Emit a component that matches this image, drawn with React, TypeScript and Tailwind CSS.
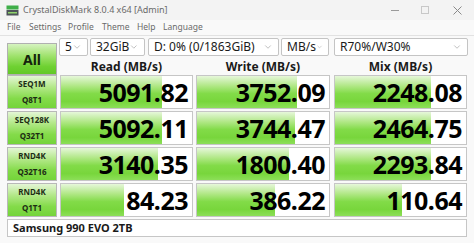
import React from 'react';
import { ChevronDown } from 'lucide-react';

interface Row {
  l1: string;
  l2: string;
  vals: { text: string; fill: number }[];
}

const rows: Row[] = [
  { l1: 'SEQ1M', l2: 'Q8T1', vals: [{ text: '5091.82', fill: 0.774 }, { text: '3752.09', fill: 0.754 }, { text: '2248.08', fill: 0.73 }] },
  { l1: 'SEQ128K', l2: 'Q32T1', vals: [{ text: '5092.11', fill: 0.774 }, { text: '3744.47', fill: 0.746 }, { text: '2464.75', fill: 0.73 }] },
  { l1: 'RND4K', l2: 'Q32T16', vals: [{ text: '3140.35', fill: 0.744 }, { text: '1800.40', fill: 0.7 }, { text: '2293.84', fill: 0.73 }] },
  { l1: 'RND4K', l2: 'Q1T1', vals: [{ text: '84.23', fill: 0.48 }, { text: '386.22', fill: 0.59 }, { text: '110.64', fill: 0.51 }] },
];

const colWidths = ['w-[133px]', 'w-[134px]', 'w-[133px]'];

const Select = ({ text, width }: { text: string; width: string }) => (
  <div className={`${width} h-[18px] flex items-center justify-between bg-white border border-[#c4c4c4] rounded-[2px] pl-[5px] pr-[5px]`}>
    <span className="text-[12px] leading-none text-[#1a1a1a]">{text}</span>
    <ChevronDown size={10} strokeWidth={1.5} className="text-[#9a9a9a]" />
  </div>
);

const AppIcon = () => (
  <svg width="13" height="11" viewBox="0 0 13 11">
    <rect x="0.5" y="0.5" width="12" height="4" fill="#3fae49" />
    <rect x="0.5" y="5" width="12" height="5.5" fill="#4d5358" />
    <rect x="2" y="7" width="9" height="1.5" fill="#8fd36b" />
  </svg>
);

export default function App() {
  return (
    <div className="w-[474px] h-[243px] bg-[#f9f9f9] flex flex-col overflow-hidden" style={{ fontFamily: '"Noto Sans", "Open Sans", sans-serif' }}>
      {/* title bar */}
      <div className="h-[20px] bg-[#f3f3f3] flex items-center pl-[6px]">
        <AppIcon />
        <span className="ml-[4px] text-[9px] text-[#6a6a6a]">CrystalDiskMark 8.0.4 x64 [Admin]</span>
        <div className="ml-auto flex items-center h-full">
          <div className="w-[30px] flex justify-center">
            <div className="w-[8px] h-px bg-[#9a9a9a]" />
          </div>
          <div className="w-[30px] flex justify-center">
            <div className="w-[8px] h-[8px] border border-[#c8c8c8]" />
          </div>
          <div className="w-[34px] flex justify-center">
            <svg width="9" height="9" viewBox="0 0 9 9">
              <path d="M0.5 0.5 L8.5 8.5 M8.5 0.5 L0.5 8.5" stroke="#8a8a8a" strokeWidth="1" />
            </svg>
          </div>
        </div>
      </div>

      {/* menu */}
      <div className="h-[14px] flex items-center pl-[7px] text-[8.5px] text-[#6a6a6a] border-b border-[#e2e2e2] box-content pb-px">
        <span className="w-[22px]">File</span>
        <span className="w-[39px]">Settings</span>
        <span className="w-[34px]">Profile</span>
        <span className="w-[35px]">Theme</span>
        <span className="w-[26px]">Help</span>
        <span>Language</span>
      </div>

      {/* body */}
      <div className="pl-[7px] pt-[2px] flex flex-col">
        <div className="flex">
          <div className="w-[50px] h-[32px] mt-[5px] flex items-center justify-center border border-[#b0b0b0] bg-[linear-gradient(to_bottom,#d6f3c0_0%,#9fe26c_40%,#6fd132_75%,#62c827_100%)]">
            <span className="text-[14px] font-bold text-[#14240c]">All</span>
          </div>
          <div className="ml-[2px] flex flex-col">
            <div className="flex h-[18px]">
              <Select text="5" width="w-[29px]" />
              <div className="w-[2px]" />
              <Select text="32GiB" width="w-[55px]" />
              <div className="w-[3px]" />
              <Select text="D: 0% (0/1863GiB)" width="w-[131px]" />
              <div className="w-[2px]" />
              <Select text="MB/s" width="w-[48px]" />
              <div className="w-[5px]" />
              <Select text="R70%/W30%" width="w-[134px]" />
            </div>
            <div className="flex h-[19px] items-center ml-[1px] gap-[3px] pt-[2px]">
              <div className="w-[133px] text-center text-[12px] font-bold text-[#1a1a1a]">Read (MB/s)</div>
              <div className="w-[134px] text-center text-[12px] font-bold text-[#1a1a1a]">Write (MB/s)</div>
              <div className="w-[133px] ml-[1px] text-center text-[12px] font-bold text-[#1a1a1a]">Mix (MB/s)</div>
            </div>
          </div>
        </div>

        <div className="flex flex-col gap-[2px]">
          {rows.map((row, i) => (
            <div key={i} className="flex h-[34px]">
              <div className="w-[50px] h-full flex flex-col border border-[#b8b8b8] bg-[linear-gradient(to_bottom,#e4f6d6_0%,#b3e889_35%,#84db4a_70%,#74d43a_100%)]">
                <div className="flex-1 flex items-center justify-center text-[8px] font-bold text-[#1c2c14] leading-none">{row.l1}</div>
                <div className="flex-1 flex items-center justify-center text-[8px] font-bold text-[#1c2c14] leading-none">{row.l2}</div>
              </div>
              {row.vals.map((v, j) => (
                <div key={j} className={`${colWidths[j]} h-full relative bg-white border border-[#c6c6c6] ${j === 2 ? 'ml-[4px]' : 'ml-[3px]'}`}>
                  <div
                    className="absolute left-0 top-0 bottom-0 bg-[linear-gradient(to_bottom,#e6f7da_0%,#b2e888_30%,#82db48_55%,#78d63c_80%,#8cdf58_100%)]"
                    style={{ width: `${v.fill * 100}%` }}
                  />
                  <div className="relative h-full flex items-center justify-end pr-[4px]">
                    <span className="text-[25px] font-bold text-black leading-none tracking-[-0.5px]">{v.text}</span>
                  </div>
                </div>
              ))}
            </div>
          ))}
        </div>

        <div className="mt-[2px] w-[460px] h-[18px] bg-white border border-[#c6c6c6] flex items-center pl-[5px]">
          <span className="text-[11px] font-bold text-[#1a1a1a]">Samsung 990 EVO 2TB</span>
        </div>
      </div>
    </div>
  );
}
